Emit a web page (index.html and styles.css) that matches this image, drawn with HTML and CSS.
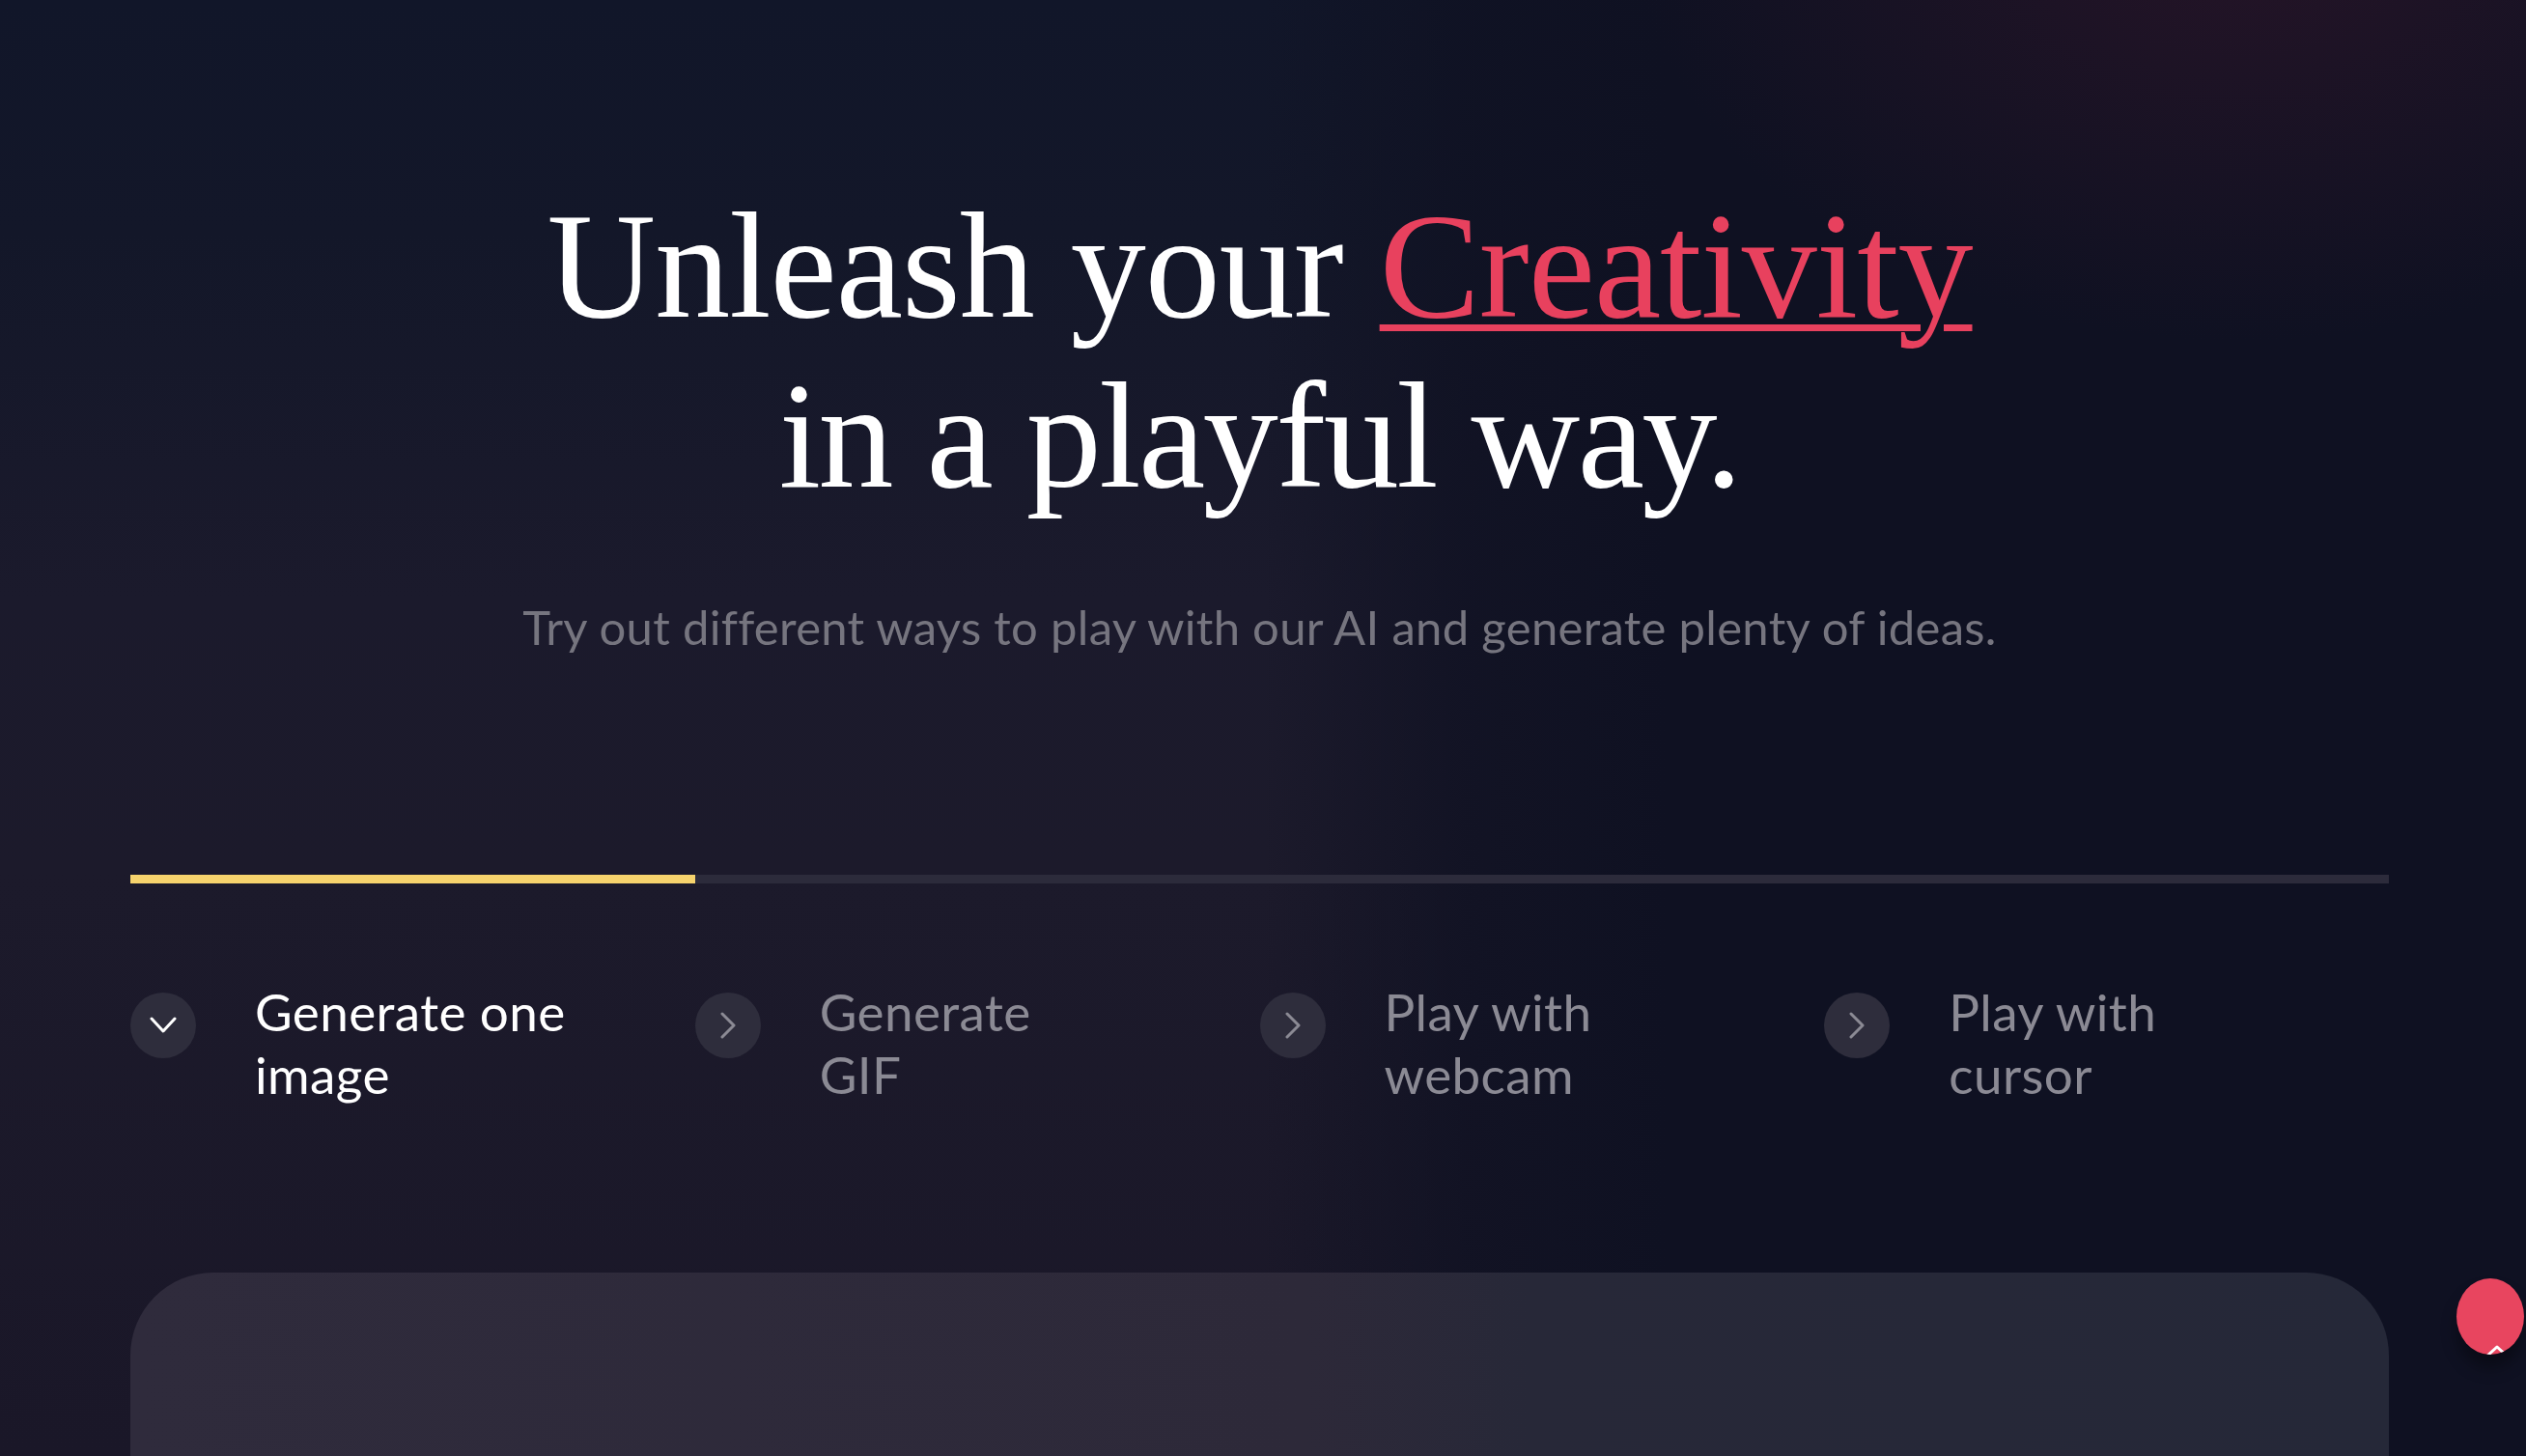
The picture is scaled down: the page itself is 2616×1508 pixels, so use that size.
FILE: index.html
```html
<!DOCTYPE html>
<html lang="en">
<head>
<meta charset="utf-8">
<title>Unleash your Creativity</title>
<link rel="stylesheet" href="styles.css">
</head>
<body>
<main class="page">
  <section class="hero">
    <h1 class="title">Unleash your <span class="accent">Creativity</span><br><span class="line-two">in a playful way.</span></h1>
    <p class="subtitle">Try out different ways to play with our AI and generate plenty of ideas.</p>
  </section>

  <section class="modes">
    <div class="progress"><div class="progress-fill" style="width:25%"></div></div>
    <ul class="tabs">
      <li class="tab is-active">
        <span class="tab-icon"><svg viewBox="0 0 28 18" width="28" height="18"><path d="M2 2 L14 15 L26 2" fill="none" stroke="currentColor" stroke-width="3" stroke-linecap="round" stroke-linejoin="round"/></svg></span>
        <span class="tab-label">Generate one<br>image</span>
      </li>
      <li class="tab">
        <span class="tab-icon"><svg viewBox="0 0 18 28" width="18" height="28"><path d="M3 2 L15 14 L3 26" fill="none" stroke="currentColor" stroke-width="3" stroke-linecap="round" stroke-linejoin="round"/></svg></span>
        <span class="tab-label">Generate<br>GIF</span>
      </li>
      <li class="tab">
        <span class="tab-icon"><svg viewBox="0 0 18 28" width="18" height="28"><path d="M3 2 L15 14 L3 26" fill="none" stroke="currentColor" stroke-width="3" stroke-linecap="round" stroke-linejoin="round"/></svg></span>
        <span class="tab-label">Play with<br>webcam</span>
      </li>
      <li class="tab">
        <span class="tab-icon"><svg viewBox="0 0 18 28" width="18" height="28"><path d="M3 2 L15 14 L3 26" fill="none" stroke="currentColor" stroke-width="3" stroke-linecap="round" stroke-linejoin="round"/></svg></span>
        <span class="tab-label">Play with<br>cursor</span>
      </li>
    </ul>
    <div class="stage"></div>
  </section>

  <button class="to-top" aria-label="Back to top"><svg viewBox="0 0 24 14" width="24" height="14"><path d="M2 12 L12 3 L22 12" fill="none" stroke="#fff" stroke-width="3" stroke-linecap="round" stroke-linejoin="round"/></svg></button>
</main>
</body>
</html>
```

FILE: styles.css
```css
html, body {
  margin: 0;
  padding: 0;
  height: 100%;
  overflow: hidden;
  background: #0f1122;
}

.page {
  position: relative;
  min-height: 1508px;
  box-sizing: border-box;
  padding: 188px 142px 0 135px;
  font-family: "Lato", "Noto Sans", sans-serif;
  background:
    radial-gradient(ellipse 900px 620px at 2320px -80px, rgba(52, 22, 42, 0.6), rgba(52, 22, 42, 0) 70%),
    linear-gradient(90deg, rgba(15, 17, 34, 0) 0, rgba(15, 17, 34, 0) 50%, rgba(15, 17, 34, 0.75) 58%, #0f1122 66%),
    linear-gradient(180deg, #111629 0, #131729 240px, #1b1a2c 620px, #1c1a2b 900px, #1a1728 1508px);
}

.hero {
  text-align: center;
}

.title {
  margin: 0;
  font-family: "Liberation Serif", "Times New Roman", serif;
  font-weight: 400;
  font-size: 156px;
  line-height: 176px;
  letter-spacing: -1px;
  color: #ffffff;
}

.line-two {
  letter-spacing: -2.5px;
}

.accent {
  color: #e8415e;
  text-decoration: underline;
  text-decoration-thickness: 7px;
  text-underline-offset: 8px;
  text-decoration-skip-ink: auto;
}

.subtitle {
  margin: 80px 0 0;
  font-size: 49px;
  line-height: 58px;
  letter-spacing: 0.3px;
  color: #76757f;
}

.modes {
  margin-top: 228px;
}

.progress {
  height: 9px;
  background: #2c2b3b;
}

.progress-fill {
  height: 100%;
  background: #f6d36d;
}

.tabs {
  list-style: none;
  margin: 100px 0 0;
  padding: 0;
  display: grid;
  grid-template-columns: repeat(4, 1fr);
}

.tab {
  display: flex;
  align-items: flex-start;
  gap: 61px;
  color: #8b8a94;
}

.tab.is-active {
  color: #ffffff;
}

.tab-icon {
  flex: none;
  width: 68px;
  height: 68px;
  margin-top: 13px;
  border-radius: 50%;
  background: #2e2d3c;
  display: flex;
  align-items: center;
  justify-content: center;
  color: #8b8a94;
}

.tab.is-active .tab-icon {
  color: #ffffff;
}

.tab-label {
  font-size: 53px;
  line-height: 65px;
  letter-spacing: 0.4px;
}

.stage {
  margin-top: 173px;
  height: 400px;
  border-radius: 86px 86px 0 0;
  background: linear-gradient(90deg, #2f2b3c 0%, #2d2939 52%, #272838 62%, #252838 100%);
}

.to-top {
  position: absolute;
  left: 2544px;
  top: 1324px;
  width: 70px;
  height: 79px;
  padding: 0;
  border: 0;
  border-radius: 50%;
  background: #e8455f;
  overflow: hidden;
  box-shadow: 0 14px 16px rgba(0, 0, 0, 0.35);
}

.to-top svg {
  position: absolute;
  left: 30px;
  top: 68px;
}
```
